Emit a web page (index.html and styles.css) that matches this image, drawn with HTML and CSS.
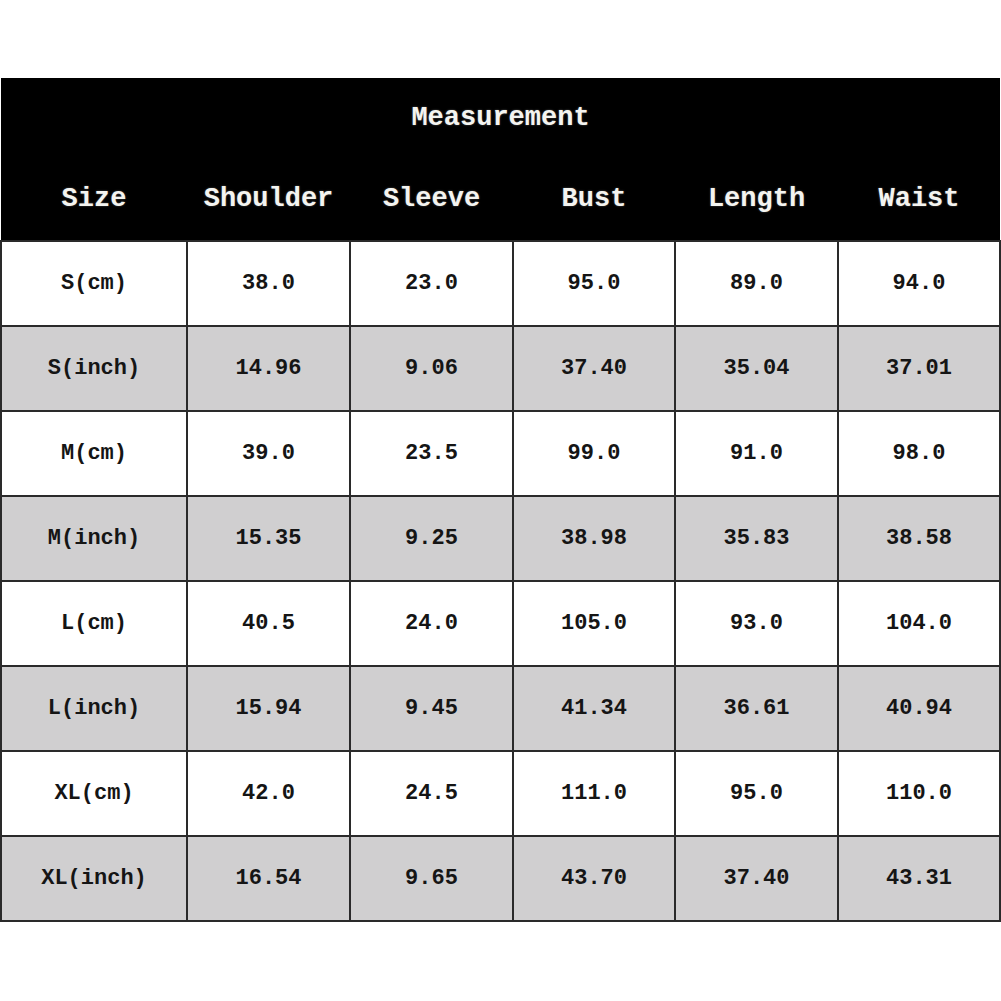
FILE: index.html
```html
<!DOCTYPE html>
<html>
<head>
<meta charset="utf-8">
<link rel="stylesheet" href="styles.css">
</head>
<body>
<div class="page">
  <table class="chart">
    <colgroup>
      <col class="c1"><col class="c2"><col class="c2"><col class="c3"><col class="c2"><col class="c3">
    </colgroup>
    <thead>
      <tr class="title-row"><th colspan="6">Measurement</th></tr>
      <tr class="head-row">
        <th>Size</th><th>Shoulder</th><th>Sleeve</th><th>Bust</th><th>Length</th><th>Waist</th>
      </tr>
    </thead>
    <tbody>
      <tr><td>S(cm)</td><td>38.0</td><td>23.0</td><td>95.0</td><td>89.0</td><td>94.0</td></tr>
      <tr class="alt"><td>S(inch)</td><td>14.96</td><td>9.06</td><td>37.40</td><td>35.04</td><td>37.01</td></tr>
      <tr><td>M(cm)</td><td>39.0</td><td>23.5</td><td>99.0</td><td>91.0</td><td>98.0</td></tr>
      <tr class="alt"><td>M(inch)</td><td>15.35</td><td>9.25</td><td>38.98</td><td>35.83</td><td>38.58</td></tr>
      <tr><td>L(cm)</td><td>40.5</td><td>24.0</td><td>105.0</td><td>93.0</td><td>104.0</td></tr>
      <tr class="alt"><td>L(inch)</td><td>15.94</td><td>9.45</td><td>41.34</td><td>36.61</td><td>40.94</td></tr>
      <tr><td>XL(cm)</td><td>42.0</td><td>24.5</td><td>111.0</td><td>95.0</td><td>110.0</td></tr>
      <tr class="alt"><td>XL(inch)</td><td>16.54</td><td>9.65</td><td>43.70</td><td>37.40</td><td>43.31</td></tr>
    </tbody>
  </table>
</div>
</body>
</html>
```

FILE: styles.css
```css
html, body {
  margin: 0;
  padding: 0;
  background: #ffffff;
}
.page {
  width: 1001px;
  height: 1001px;
  padding-top: 78px;
  box-sizing: border-box;
}
.chart {
  width: 1000px;
  border-collapse: collapse;
  table-layout: fixed;
  font-family: "Liberation Mono", "DejaVu Sans Mono", monospace;
  font-weight: bold;
}
.c1 { width: 186px; }
.c2 { width: 163px; }
.c3 { width: 162px; }
.chart thead th {
  background: #000000;
  color: #f4f4f0;
  font-size: 27px;
  font-weight: bold;
  text-align: center;
  padding: 0;
  border: none;
  text-shadow: 0 0 2px rgba(255,255,255,0.35);
}
.title-row th {
  height: 80px;
  vertical-align: middle;
}
.head-row th {
  height: 82px;
  vertical-align: middle;
  padding-bottom: 8px;
}
.chart td {
  height: 83px;
  border: 2px solid #2a2a2a;
  text-align: center;
  vertical-align: middle;
  font-size: 22px;
  color: #151515;
  padding: 0;
}
.chart tbody tr.alt td {
  background: #d0cfd0;
}
```
